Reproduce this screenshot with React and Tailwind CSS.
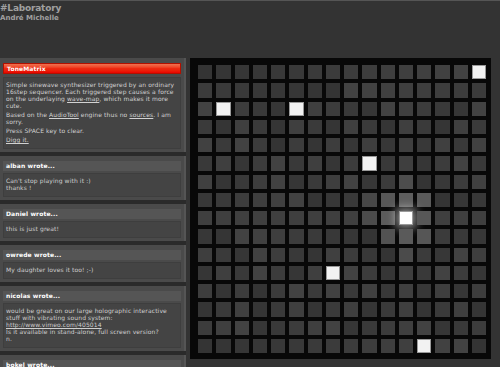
import { Fragment } from "react";

// lit steps of the matrix
const lit = ["0,15", "2,1", "2,5", "5,9", "8,11", "11,7", "15,12"];

// cells lit up by the wave around the active step
const glow = {
  "6,11": "#4d4d4d",
  "7,9": "#474747",
  "7,10": "#575757",
  "7,11": "#5e5e5e",
  "7,12": "#5a5a5a",
  "8,9": "#4b4b4b",
  "8,10": "#5b5b5b",
  "8,12": "#575757",
  "9,10": "#525252",
  "9,11": "#5a5a5a",
  "9,12": "#565656",
  "10,11": "#4b4b4b",
};

function cellColor(r, c) {
  const key = `${r},${c}`;
  if (glow[key]) return glow[key];
  const v = 52 + ((r * 37 + c * 91 + r * c * 13) % 15);
  const h = v.toString(16);
  return `#${h}${h}${h}`;
}

function Matrix() {
  const rows = Array.from({ length: 16 }, (_, r) => r);
  return (
    <div className="w-[301px] h-[301px] bg-[#080808] pl-[8px] pt-[7px] shrink-0">
      <div className="grid grid-cols-16 gap-[4px] w-[288px]">
        {rows.map((r) =>
          rows.map((c) => {
            const on = lit.includes(`${r},${c}`);
            const big = r === 8 && c === 11;
            return on ? (
              <div
                key={`${r}-${c}`}
                className={`aspect-square bg-[#f2f2f2] border border-[#9a9a9a] ${
                  big ? "shadow-[0_0_10px_3px_rgba(255,255,255,0.55)] bg-white" : ""
                }`}
              />
            ) : (
              <div
                key={`${r}-${c}`}
                className="aspect-square"
                style={{ backgroundColor: cellColor(r, c) }}
              />
            );
          })
        )}
      </div>
    </div>
  );
}

function A({ children }) {
  return <span className="underline">{children}</span>;
}

function Comment({ name, children }) {
  return (
    <div className="bg-[#4a4a4a] border-r-[2px] border-[#555] px-[3px] pt-[5px] pb-[3px]">
      <div className="h-[10px] bg-[#555555] text-white font-bold px-[3px] leading-[10px]">
        {name} wrote...
      </div>
      <div className="mt-[2px] bg-[#444444] border border-[#3e3e3e] px-[2px] pt-[3px] pb-[5px] text-[#cfcfcf]">
        {children}
      </div>
    </div>
  );
}

export default function App() {
  return (
    <div
      className="w-[500px] h-[367px] overflow-hidden bg-[#333333] border-t border-[#555] text-[6px] leading-[7px] tracking-[0.12px]"
      style={{ fontFamily: '"DejaVu Sans", Verdana, sans-serif' }}
    >
      <div className="h-[57px] pt-[2px] text-[#a0a0a0] font-bold tracking-normal">
        <div className="text-[9px] leading-[11px] tracking-[-0.2px]">#Laboratory</div>
        <div className="text-[7px] leading-[8px]">André Michelle</div>
      </div>

      <div className="flex gap-[4px] items-start">
        <div className="w-[186px] shrink-0 flex flex-col gap-[4px] bg-[#2a2a2a]">
          <div className="bg-[#4a4a4a] border-r-[2px] border-[#555] px-[3px] pt-[5px] pb-[3px]">
            <div className="h-[11px] bg-gradient-to-b from-[#f0704e] via-[#ee2a10] to-[#e80000] border border-[#b01000] text-white font-bold px-[3px] leading-[9px]">
              ToneMatrix
            </div>
            <div className="mt-[3px] bg-[#444444] border border-[#3e3e3e] px-[2px] pt-[3px] pb-[5px] text-[#d2d2d2] flex flex-col gap-[2px]">
              <p>
                Simple sinewave synthesizer triggered by an ordinary 16step sequencer. Each
                triggered step causes a force on the underlaying <A>wave-map</A>, which makes it
                more cute.
              </p>
              <p>
                Based on the <A>AudioTool</A> engine thus no <A>sources</A>. I am sorry.
              </p>
              <p>Press SPACE key to clear.</p>
              <p>
                <A>Digg it.</A>
              </p>
            </div>
          </div>

          <Comment name="alban">
            Can't stop playing with it :)
            <br />
            thanks !
          </Comment>
          <Comment name="Daniel">this is just great!</Comment>
          <Comment name="owrede">My daughter loves it too! ;-)</Comment>
          <Comment name="nicolas">
            would be great on our large holographic interactive stuff with vibrating sound
            system:
            <br />
            <A>http://www.vimeo.com/405014</A>
            <br />
            Is it available in stand-alone, full screen version?
            <br />
            n.
          </Comment>
          <Comment name="bokel">Fantastic!</Comment>
        </div>

        <Matrix />
      </div>
    </div>
  );
}
